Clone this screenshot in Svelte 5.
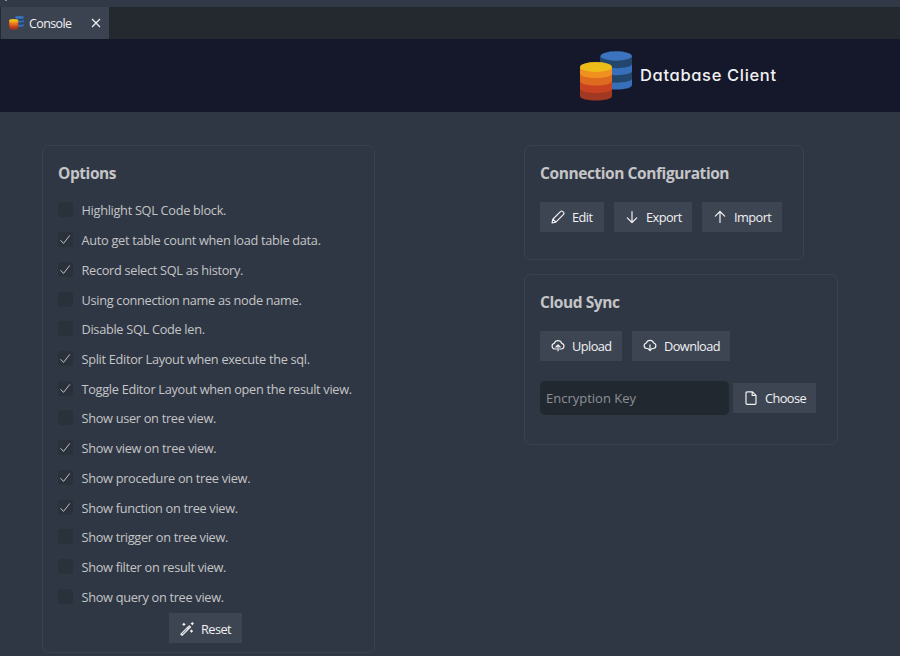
<script>
  const options = [
    ['Highlight SQL Code block.', false],
    ['Auto get table count when load table data.', true],
    ['Record select SQL as history.', true],
    ['Using connection name as node name.', false],
    ['Disable SQL Code len.', false],
    ['Split Editor Layout when execute the sql.', true],
    ['Toggle Editor Layout when open the result view.', true],
    ['Show user on tree view.', false],
    ['Show view on tree view.', true],
    ['Show procedure on tree view.', true],
    ['Show function on tree view.', true],
    ['Show trigger on tree view.', false],
    ['Show filter on result view.', false],
    ['Show query on tree view.', false]
  ];
</script>

{#snippet logo(cls)}
  <svg class={cls} viewBox="0 0 52 50">
    <path fill="#376fba" d="M20.500 5v29c0 6 31.500 6 31.500 0V5z" />
    <path fill="#23466d" d="M20.500 6v7c0 5.500 31.500 5.500 31.500 0V6z" />
    <path fill="#23466d" d="M20.500 20v7.500c0 5.500 31.500 5.500 31.500 0V20c0 5.500-31.500 5.500-31.500 0z" />
    <ellipse cx="36.250" cy="5" rx="15.750" ry="4.700" fill="#3b73be" />
    <path fill="#a03822" d="M0 16v29c0 6 32 6 32 0V16z" />
    <path fill="#c9421f" d="M0 16v21.500c0 6 32 6 32 0V16z" />
    <path fill="#de6b1f" d="M0 16v14c0 6 32 6 32 0V16z" />
    <path fill="#f0901e" d="M0 16v6.500c0 6 32 6 32 0V16z" />
    <ellipse cx="16" cy="16" rx="16" ry="4.900" fill="#ecbd18" />
  </svg>
{/snippet}

{#snippet icon(name)}
  <svg class="icon" viewBox="0 0 14 14">
    {#if name === 'edit'}
      <path d="M1 13l.8-3.800L9.700 1.400a1.300 1.300 0 0 1 1.900 0l1 1a1.300 1.300 0 0 1 0 1.900L4.800 12.200zM2.200 9.300l2.500 2.500" />
    {:else if name === 'down'}
      <path d="M7 1.500v11M2.300 7.800L7 12.500l4.700-4.700" />
    {:else if name === 'up'}
      <path d="M7 12.500v-11M2.300 6.200L7 1.500l4.700 4.700" />
    {:else if name === 'upload'}
      <path d="M5.500 10H3.600a2.900 2.900 0 0 1-.3-5.700 3.900 3.900 0 0 1 7.400 0 2.900 2.900 0 0 1-.3 5.700H8.500M7 11.800V6M4.900 8L7 5.900 9.100 8" />
    {:else if name === 'download'}
      <path d="M5 9.500H3.600a2.800 2.800 0 0 1-.3-5.500 3.900 3.900 0 0 1 7.400 0 2.800 2.800 0 0 1-.3 5.500H9M7 5.800v5.600M5 9.600l2 2 2-2" />
    {:else if name === 'file'}
      <path d="M3 .8h5.500L12 4.300v8a1 1 0 0 1-1 1H3a1 1 0 0 1-1-1V1.800a1 1 0 0 1 1-1zM8.200 1v3.500h3.600" />
    {:else}
      <path d="M.9 12.200l8.400-8.400 1.200 1.200-8.400 8.400zM7.300 5.500l1.300 1.300M3.900 1.300v2M2.900 2.300h2M12.300.6v2M11.300 1.600h2M11.500 8.100v2M10.500 9.100h2" />
    {/if}
  </svg>
{/snippet}

{#snippet button(name, label, width)}
  <button style:width="{width}px">{@render icon(name)}<span>{label}</span></button>
{/snippet}

<main>
  <div class="strip"><i></i></div>
  <nav>
    <div class="tab">
      {@render logo('mini')}
      <span>Console</span>
      <svg class="close" viewBox="0 0 10 10"><path d="M1 1l8 8M9 1L1 9" /></svg>
    </div>
  </nav>
  <header>
    {@render logo('brand')}
    <h1>Database Client</h1>
  </header>
  <div class="content">
    <section class="options">
      <h2>Options</h2>
      <div class="list">
        {#each options as [label, checked]}
          <label>
            <span class="box">
              {#if checked}<svg viewBox="0 0 15 15"><path d="M2.500 8.200l3 3.200 6.300-8" /></svg>{/if}
            </span>
            <span>{label}</span>
          </label>
        {/each}
      </div>
      <div class="reset">{@render button('wand', 'Reset', 73)}</div>
    </section>
    <div class="right">
      <section class="connection">
        <h2>Connection Configuration</h2>
        <div class="buttons">
          {@render button('edit', 'Edit', 64)}
          {@render button('down', 'Export', 78)}
          {@render button('up', 'Import', 80)}
        </div>
      </section>
      <section class="cloud">
        <h2>Cloud Sync</h2>
        <div class="buttons">
          {@render button('upload', 'Upload', 82)}
          {@render button('download', 'Download', 98)}
        </div>
        <div class="key">
          <input placeholder="Encryption Key" />
          {@render button('file', 'Choose', 83)}
        </div>
      </section>
    </div>
  </div>
</main>

<style>
  :global(body) { margin: 0; background: #303744; }
  main {
    width: 900px; height: 656px; overflow: hidden; box-sizing: border-box;
    background: #303744; color: #c4c5c7;
    font-family: "Open Sans", "Noto Sans", sans-serif; font-size: 13px;
  }
  .strip { height: 7px; background: #323946; }
  .strip i { display: block; width: 2px; height: 1px; margin-left: 5px; background: #8c929b; }
  nav { height: 32px; background: #23292f; padding-left: 1px; }
  .tab { width: 108px; height: 32px; box-sizing: border-box; background: #3b4250; color: #f0f1f3; display: flex; align-items: center; padding-left: 8px; }
  .tab span { width: 45px; margin-left: 5px; white-space: nowrap; font-size: 12.5px; letter-spacing: -.6px; }
  .mini { width: 15px; height: 14px; }
  .close { width: 10px; height: 10px; margin-left: 17px; fill: none; stroke: #eceef0; stroke-width: 1.3; }
  header { height: 73px; background: #15182a; display: flex; align-items: center; padding-left: 580px; box-sizing: border-box; }
  .brand { width: 52px; height: 50px; margin-top: 1px; }
  h1 { margin: -1px 0 0 8px; font: 500 16.5px Inter, Lato, sans-serif; font-feature-settings: "cv11", "ss03"; color: #f1f1f3; letter-spacing: .66px; white-space: nowrap; }
  .content { display: flex; align-items: flex-start; padding: 33px 0 0 42px; }
  section { border: 1px solid #3b414e; border-radius: 7px; box-sizing: border-box; padding: 16px 0 0 15px; }
  .options { width: 333px; height: 508px; }
  .right { margin-left: 149px; display: flex; flex-direction: column; gap: 14px; }
  .connection { width: 280px; height: 115px; }
  .cloud { width: 314px; height: 171px; }
  h2 { margin: 0; font-size: 15.5px; line-height: 22px; font-weight: 700; letter-spacing: -.42px; white-space: nowrap; }
  .list { margin-top: 11.500px; }
  label { display: flex; height: 29.72px; align-items: center; font-size: 12.75px; letter-spacing: -.3px; white-space: nowrap; }
  .box { width: 15px; height: 15px; margin: -1px 8.500px 0 0; border-radius: 3px; background: #2a313a; }
  .box svg { display: block; width: 15px; height: 15px; fill: none; stroke: #c0c2c5; stroke-width: 1; }
  .reset { display: flex; margin: 1.500px 0 0 111px; }
  .reset button { padding-top: 1px; }
  .buttons { display: flex; gap: 10px; margin-top: 18px; }
  button {
    height: 30px; flex: none; box-sizing: border-box; border: 0; padding: 0 0 0 11px; background: #3e4552; color: #f0f1f2;
    font: inherit; font-size: 12.75px; letter-spacing: -.55px; display: flex; align-items: center; gap: 7px; white-space: nowrap;
  }
  .icon { width: 14px; height: 14px; flex: none; fill: none; stroke: #f0f1f2; stroke-width: 1.2; stroke-linecap: round; stroke-linejoin: round; }
  .key { display: flex; align-items: center; gap: 4px; margin-top: 20px; }
  input { width: 189px; height: 34px; box-sizing: border-box; border: 0; border-radius: 5px; padding: 0 6px; background: #22282f; font: inherit; font-size: 13px; }
  input::placeholder { color: #8b9099; opacity: 1; }
</style>
